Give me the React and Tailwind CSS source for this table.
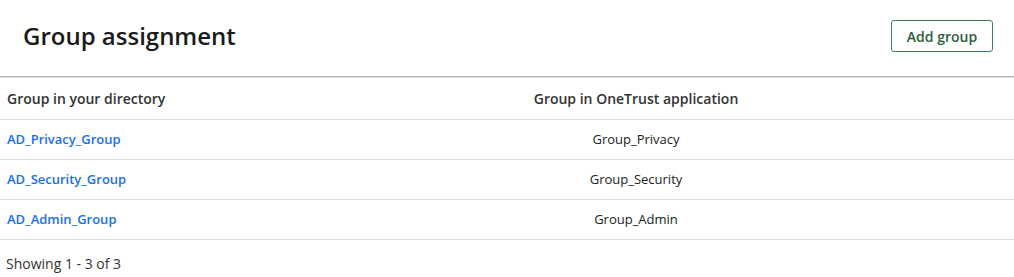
export default function App() {
  const rows = [
    ["AD_Privacy_Group", "Group_Privacy"],
    ["AD_Security_Group", "Group_Security"],
    ["AD_Admin_Group", "Group_Admin"],
  ];
  return (
    <div className="w-[1014px] h-[277px] bg-white overflow-hidden" style={{ fontFamily: '"Open Sans", sans-serif' }}>
      <div className="h-[76px] flex items-center justify-between pl-[23px] pr-[21px] pb-[4px]">
        <h1 className="text-[24px] leading-[32px] text-[#1a1a1a] font-semibold">Group assignment</h1>
        <button className="h-[32px] w-[102px] rounded-[3px] border border-[#3d7f50] text-[14px] font-semibold text-[#2d5e3c] bg-white">
          Add group
        </button>
      </div>
      <div className="h-[1px] bg-[#b8b8b8]" />
      <div className="h-[1px] bg-[#e0e0e0]" />
      <div className="grid grid-cols-[258px_1fr] h-[42px] items-center border-b border-[#dcdcdc] text-[14px] font-semibold text-[#333]">
        <div className="pl-[7px]">Group in your directory</div>
        <div className="text-center">Group in OneTrust application</div>
      </div>
      {rows.map(([a, b]) => (
        <div key={a} className="grid grid-cols-[258px_1fr] h-[40px] items-center border-b border-[#dcdcdc]">
          <div className="pl-[7px] text-[13px] font-semibold text-[#1a6fe8]">{a}</div>
          <div className="text-center text-[13px] text-[#222]">{b}</div>
        </div>
      ))}
      <div className="pl-[6px] pt-[13px] text-[14px] text-[#333]">Showing 1 - 3 of 3</div>
    </div>
  );
}
